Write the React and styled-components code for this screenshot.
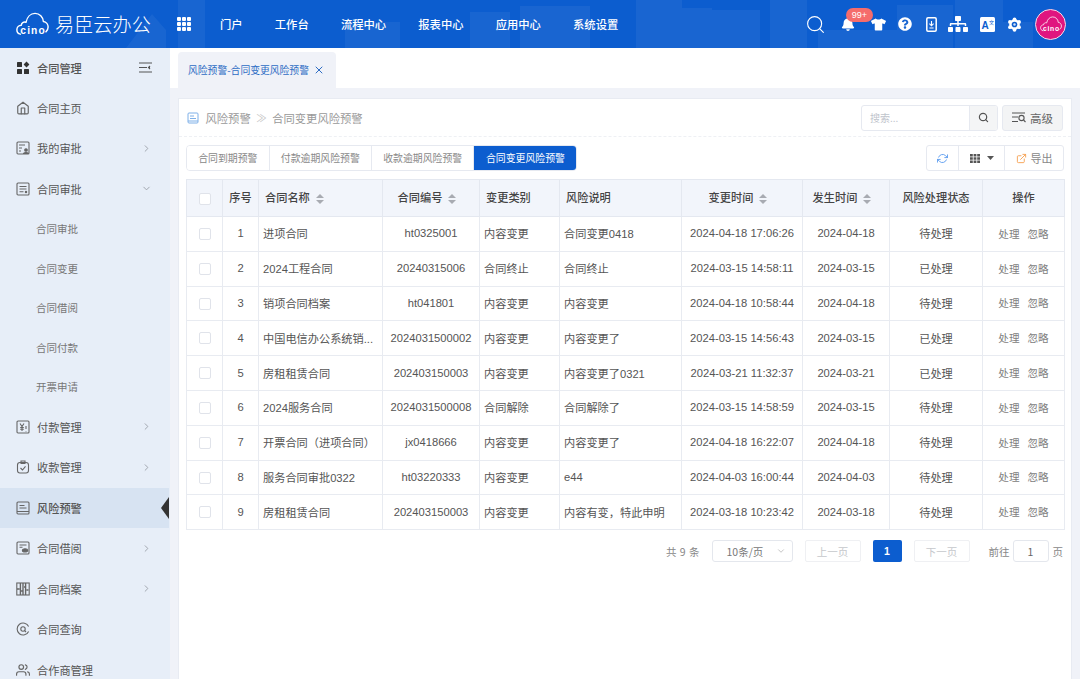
import styled, { createGlobalStyle } from 'styled-components';
import { FaBell, FaTshirt, FaQuestionCircle, FaSitemap } from 'react-icons/fa';
import { FiHome, FiSearch, FiChevronRight, FiChevronDown, FiRefreshCw, FiExternalLink, FiX, FiUsers } from 'react-icons/fi';

const Global = createGlobalStyle`
  html, body { margin: 0; padding: 0; height: 100%; overflow: hidden; }
  body { font-family: "Noto Sans CJK SC", "Liberation Sans", sans-serif; color: #555; }
  * { box-sizing: border-box; }
`;

const Page = styled.div`
  width: 1080px;
  height: 679px;
  display: flex;
  flex-direction: column;
  overflow: hidden;
`;

/* ===== cabecera ===== */
const Header = styled.header`
  position: relative;
  height: 48px;
  flex: none;
  display: flex;
  align-items: center;
  background: #0c5dcf;
  color: #fff;
`;

const HeaderDecor = styled.svg`
  position: absolute;
  inset: 0;
  width: 100%;
  height: 100%;
`;

const Logo = styled.div`
  position: relative;
  width: 170px;
  flex: none;
  display: flex;
  align-items: center;
  gap: 6px;
  padding-left: 16px;
  font-size: 19.2px;
  font-weight: 300;
  white-space: nowrap;
`;

const GridIcon = styled.div`
  width: 14px;
  height: 14px;
  margin-left: 7px;
  display: grid;
  grid-template-columns: repeat(3, 4px);
  grid-auto-rows: 4px;
  gap: 1px;
  flex: none;
  position: relative;
  i { background: #fff; border-radius: 1px; }
`;

const Nav = styled.nav`
  position: relative;
  display: flex;
  margin-left: 29px;
  gap: 32.2px;
`;

const NavItem = styled.span`
  font-size: 11.3px;
  font-weight: 500;
  white-space: nowrap;
`;

const HeaderTools = styled.div`
  position: relative;
  margin-left: auto;
  display: flex;
  align-items: center;
  padding-right: 14px;
`;

const Tool = styled.span`
  position: relative;
  display: flex;
  align-items: center;
  justify-content: center;
  width: ${props => props.$w}px;
  height: 24px;
  font-size: ${props => props.$size || 16}px;
`;

const Badge = styled.span`
  position: absolute;
  top: -4px;
  left: 18px;
  width: 27px;
  height: 14px;
  border-radius: 7px;
  background: #f56c6c;
  color: #fff;
  font-size: 9px;
  line-height: 14px;
  text-align: center;
  font-family: "Liberation Sans", sans-serif;
`;

const Avatar = styled.div`
  width: 31px;
  height: 31px;
  margin-left: 5px;
  border-radius: 50%;
  border: 1.5px solid #f3dbe8;
  background: #e0157f;
  display: flex;
  align-items: center;
  justify-content: center;
`;

/* ===== cuerpo ===== */
const Body = styled.div`
  flex: 1;
  display: flex;
  min-height: 0;
`;

const Sidebar = styled.aside`
  width: 170px;
  flex: none;
  background: #e7eef8;
  overflow: hidden;
`;

const MenuRow = styled.div`
  position: relative;
  height: ${props => props.$sub ? '39.5px' : '40.5px'};
  display: flex;
  align-items: center;
  padding: 0 17px 0 16px;
  gap: 7px;
  font-size: ${props => props.$sub ? '10.5px' : '11.2px'};
  color: ${props => props.$sub ? '#777' : '#555'};
  font-weight: ${props => props.$strong ? 500 : 400};
  padding-left: ${props => props.$sub ? '36px' : '16px'};
  background: ${props => props.$active ? '#d7e3f2' : 'none'};
  margin-right: 1px;
  white-space: nowrap;
  svg.lead { flex: none; width: 14px; height: 14px; color: #666; }
`;

const MenuHead = styled(MenuRow)`
  height: 39.6px;
`;

const MenuArrow = styled.span`
  margin-left: auto;
  display: flex;
  color: #9aa0a8;
  font-size: 11px;
`;

const ActiveMark = styled.span`
  position: absolute;
  right: 0;
  top: 9px;
  width: 0;
  height: 0;
  border-top: 11px solid transparent;
  border-bottom: 11px solid transparent;
  border-right: 8px solid #333;
`;

const Main = styled.main`
  flex: 1;
  min-width: 0;
  display: flex;
  flex-direction: column;
  background: #f0f2f8;
`;

const TabBar = styled.div`
  height: 40px;
  flex: none;
  background: #fff;
  padding: 4px 0 0 8px;
  display: flex;
`;

const PageTab = styled.div`
  width: 158px;
  display: flex;
  align-items: center;
  gap: 4px;
  padding-left: 10px;
  background: #f0f2f8;
  border-radius: 4px 4px 0 0;
  font-size: 9.8px;
  color: #2d6cc4;
  white-space: nowrap;
`;

const Card = styled.section`
  flex: 1;
  margin: 10px 8px 0 8px;
  background: #fff;
  border: 1px solid #e8ebf2;
  border-bottom: none;
  padding: 0 7px;
`;

const TopRow = styled.div`
  height: 38px;
  margin: 0 -7px;
  padding: 0 8px;
  display: flex;
  align-items: center;
  border-bottom: 1px dashed #eef0f4;
`;

const Crumbs = styled.div`
  display: flex;
  align-items: center;
  gap: 5.5px;
  font-size: 11.3px;
  color: #999;
  svg { flex: none; margin-right: 1px; }
`;

const Sep = styled.span`
  font-size: 10.5px;
  color: #c4c4c4;
`;

const SearchBox = styled.div`
  margin-left: auto;
  width: 137px;
  height: 26px;
  display: flex;
  border: 1px solid #e6e9f0;
  border-radius: 3px;
  overflow: hidden;
  font-size: 10px;
  color: #c0c4cc;
`;

const SearchInput = styled.span`
  flex: 1;
  line-height: 24px;
  padding-left: 8px;
`;

const SearchBtn = styled.span`
  width: 28px;
  display: flex;
  align-items: center;
  justify-content: center;
  background: #f4f5f6;
  border-left: 1px solid #e6e9f0;
  color: #555;
  font-size: 11px;
`;

const AdvBtn = styled.div`
  width: 61px;
  height: 26px;
  margin-left: 4px;
  display: flex;
  align-items: center;
  justify-content: center;
  gap: 4px;
  background: #f3f4f5;
  border: 1px solid #e6e9f0;
  border-radius: 3px;
  font-size: 11.5px;
  color: #666;
`;

const ToolRow = styled.div`
  display: flex;
  align-items: center;
  justify-content: space-between;
  height: 26px;
  margin-top: 8px;
`;

const Segments = styled.div`
  display: flex;
  height: 26px;
  border: 1px solid #e6e9f0;
  border-radius: 4px;
  overflow: hidden;
`;

const Segment = styled.div`
  display: flex;
  align-items: center;
  padding: 0 ${props => props.$active ? 11.5 : 11.2}px;
  font-size: 9.9px;
  color: ${props => props.$active ? '#fff' : '#888'};
  background: ${props => props.$active ? '#0c5dcf' : '#fff'};
  border-left: ${props => props.$first ? 'none' : '1px solid #e6e9f0'};
  white-space: nowrap;
`;

const TableTools = styled.div`
  display: flex;
  height: 26px;
  border: 1px solid #e6e9f0;
  border-radius: 3px;
`;

const TableTool = styled.div`
  width: ${props => props.$w}px;
  display: flex;
  align-items: center;
  justify-content: center;
  gap: 4px;
  font-size: 11px;
  color: #888;
  border-left: ${props => props.$first ? 'none' : '1px solid #e6e9f0'};
`;

const Table = styled.table`
  width: 878px;
  margin-top: 8px;
  table-layout: fixed;
  border-collapse: collapse;
  border: 1px solid #e4e8f0;
  font-size: 11.2px;
`;

const Th = styled.th`
  height: 37px;
  padding: 0 ${props => props.$tight ? 0 : 6}px 2px;
  background: #f2f5fb;
  border: 1px solid #e4e8f0;
  color: #444;
  font-weight: 500;
  text-align: ${props => props.$left ? 'left' : 'center'};
  white-space: nowrap;
`;

const Td = styled.td`
  height: 34.8px;
  padding: 0 4px 1px;
  border: 1px solid #e8ebf1;
  color: #555;
  text-align: ${props => props.$left ? 'left' : 'center'};
  white-space: nowrap;
  overflow: hidden;
  font-family: "Liberation Sans", "Noto Sans CJK SC", sans-serif;
`;

const Box = styled.span`
  display: inline-block;
  width: 12px;
  height: 12px;
  background: #fff;
  border: 1px solid #e0e3ea;
  border-radius: 2px;
  vertical-align: middle;
`;

const Sort = styled.span`
  display: inline-flex;
  flex-direction: column;
  gap: 2px;
  margin: 0 8px 0 6px;
  vertical-align: middle;
  i {
    width: 0; height: 0;
    border-left: 4px solid transparent;
    border-right: 4px solid transparent;
  }
  i:first-child { border-bottom: 4px solid #a8abb2; }
  i:last-child { border-top: 4px solid #a8abb2; }
`;

const Action = styled.span`
  font-size: 10.6px;
  color: #808080;
  & + & { margin-left: 8px; }
`;

const Pager = styled.div`
  display: flex;
  justify-content: flex-end;
  align-items: center;
  margin-top: 10px;
  height: 22px;
  padding-right: 1px;
  font-size: 10.5px;
  word-spacing: 1px;
  color: #888;
  white-space: nowrap;
`;

const PageSize = styled.div`
  width: 81px;
  height: 22px;
  margin-left: 12px;
  display: flex;
  align-items: center;
  justify-content: space-between;
  padding: 0 6px 0 14px;
  border: 1px solid #e4e7ed;
  border-radius: 3px;
  color: #777;
`;

const PageBtn = styled.div`
  width: 56px;
  height: 22px;
  margin-left: 12px;
  display: flex;
  align-items: center;
  justify-content: center;
  border: 1px solid #eff0f3;
  border-radius: 2px;
  color: #c6c8cc;
`;

const PageCurrent = styled.div`
  width: 29px;
  height: 22px;
  margin-left: 12px;
  display: flex;
  align-items: center;
  justify-content: center;
  background: #0c5dcf;
  border-radius: 2px;
  color: #fff;
  font-weight: 700;
  font-family: "Liberation Sans", sans-serif;
`;

const GoLabel = styled.span`
  margin-left: 19px;
`;

const GoInput = styled.div`
  width: 36px;
  height: 22px;
  margin: 0 4px 0 3px;
  display: flex;
  align-items: center;
  justify-content: center;
  border: 1px solid #e4e7ed;
  border-radius: 3px;
  color: #666;
`;

const CloudLogo = ({ size = 33, stroke = 1.5 }) => (
  <svg width={size} height={size * 0.72} viewBox="0 0 34 24" fill="none" stroke="#fff" strokeWidth={stroke} strokeLinecap="round" strokeLinejoin="round">
    <path d="M4.5 22.6C2 22 .9 20 .9 18c0-2.6 2-4.6 4.6-4.6C5.6 11 7.8 9.6 10.3 10.4 11.4 5 15 1.2 19.6 1.2c4.8 0 8.2 3.6 8.6 8.4 3 .3 4.9 2.8 4.9 5.6 0 2.2-.9 3.8-2.3 5" />
    <text x="4.5" y="22.6" fontSize="10.5" fontWeight="700" textLength="25" fontFamily="Liberation Sans, sans-serif" fill="#fff" stroke="none">cino</text>
  </svg>
);

const DocIcon = ({ children }) => (
  <svg className="lead" viewBox="0 0 14 14" fill="none" stroke="currentColor" strokeWidth="1.1">
    <rect x="1" y="1" width="12" height="12" rx="1" />
    {children}
  </svg>
);

const icons = {
  grid: (
    <svg className="lead" viewBox="0 0 14 14" fill="#333">
      <rect x="1" y="1" width="5" height="5" rx=".6" />
      <path d="M10.5 .6 13.4 3.5 10.5 6.4 7.6 3.5z" />
      <rect x="1" y="8" width="5" height="5" rx=".6" />
      <rect x="8" y="8" width="5" height="5" rx=".6" />
    </svg>
  ),
  home: <FiHome className="lead" />,
  mine: <DocIcon><path d="M3 4h6M3 7h3M3 10h2" /><circle cx="10" cy="9" r="1.3" fill="currentColor" /><path d="M7.5 13c0-2 5-2 5 0" fill="currentColor" /></DocIcon>,
  audit: <DocIcon><path d="M3.5 4.5h7M3.5 7h7M3.5 9.8h4" /><circle cx="10" cy="10" r=".7" fill="currentColor" /></DocIcon>,
  pay: <DocIcon><path d="M4 3.5 6 6.5 8 3.5M6 6.5V11M4.2 7.5h3.6M4.2 9.3h3.6M10 6v3M10 11v.5" /></DocIcon>,
  receive: (
    <svg className="lead" viewBox="0 0 14 14" fill="none" stroke="currentColor" strokeWidth="1.1">
      <rect x="1.5" y="2.5" width="11" height="10.5" rx="2.5" />
      <path d="M5 1h4v2.4H5zM4.5 8l2 2 3-3.6" />
    </svg>
  ),
  risk: <DocIcon><path d="M3.5 4.5h5M3.5 7h7M1 10.5h12" /></DocIcon>,
  borrow: <DocIcon><path d="M3.5 4h7M3.5 6.2h3" /><ellipse cx="9" cy="9.4" rx="2.6" ry="1.6" fill="currentColor" /></DocIcon>,
  archive: (
    <svg className="lead" viewBox="0 0 14 14" fill="none" stroke="currentColor" strokeWidth="1.1">
      <rect x=".8" y="1" width="12.4" height="12" />
      <path d="M4.4 1v12M7 1v12M9.6 1v12M1 7h2.5M5 9h1.3M8 5h1M10.5 8h2" strokeWidth="1.4" />
    </svg>
  ),
  query: (
    <svg className="lead" viewBox="0 0 14 14" fill="none" stroke="currentColor" strokeWidth="1.1">
      <path d="M12.6 9.5A6 6 0 1 1 12.6 4.5" />
      <circle cx="7" cy="7" r="2.2" />
      <path d="M8.6 8.6 10 10" />
    </svg>
  ),
  partner: <FiUsers className="lead" />,
};

const menu = [
  { label: '合同主页', icon: 'home' },
  { label: '我的审批', icon: 'mine', arrow: 'right' },
  { label: '合同审批', icon: 'audit', arrow: 'down' },
  { label: '合同审批', sub: true },
  { label: '合同变更', sub: true },
  { label: '合同借阅', sub: true },
  { label: '合同付款', sub: true },
  { label: '开票申请', sub: true },
  { label: '付款管理', icon: 'pay', arrow: 'right' },
  { label: '收款管理', icon: 'receive', arrow: 'right' },
  { label: '风险预警', icon: 'risk', active: true },
  { label: '合同借阅', icon: 'borrow', arrow: 'right' },
  { label: '合同档案', icon: 'archive', arrow: 'right' },
  { label: '合同查询', icon: 'query' },
  { label: '合作商管理', icon: 'partner' },
];

const rows = [
  ['进项合同', 'ht0325001', '内容变更', '合同变更0418', '2024-04-18 17:06:26', '2024-04-18', '待处理'],
  ['2024工程合同', '20240315006', '合同终止', '合同终止', '2024-03-15 14:58:11', '2024-03-15', '已处理'],
  ['销项合同档案', 'ht041801', '内容变更', '内容变更', '2024-04-18 10:58:44', '2024-04-18', '待处理'],
  ['中国电信办公系统销...', '2024031500002', '内容变更', '内容变更了', '2024-03-15 14:56:43', '2024-03-15', '已处理'],
  ['房租租赁合同', '202403150003', '内容变更', '内容变更了0321', '2024-03-21 11:32:37', '2024-03-21', '已处理'],
  ['2024服务合同', '2024031500008', '合同解除', '合同解除了', '2024-03-15 14:58:59', '2024-03-15', '待处理'],
  ['开票合同（进项合同）', 'jx0418666', '内容变更', '内容变更了', '2024-04-18 16:22:07', '2024-04-18', '待处理'],
  ['服务合同审批0322', 'ht03220333', '内容变更', 'e44', '2024-04-03 16:00:44', '2024-04-03', '待处理'],
  ['房租租赁合同', '202403150003', '内容变更', '内容有变，特此申明', '2024-03-18 10:23:42', '2024-03-18', '待处理'],
];

const cols = [36, 36, 124, 97, 80, 122, 121, 87, 93, 82];

const gearTeeth = [0, 60, 120, 180, 240, 300];

export default function App() {
  return (
    <Page>
      <Global />
      <Header>
        <HeaderDecor viewBox="0 0 1080 48" preserveAspectRatio="none">
          <g fill="#fff" opacity=".05">
            <path d="M126 48 152 14 166 30V48zM178 0h27v48h-27zM345 22h55v26h-55zM470 12h40v36h-40zM520 6h70v42h-70z" />
            <path d="M636 0h46v48h-46zM682 8h30v40h-30zM712 10h48v38h-48zM770 0h37v48h-37zM818 30h80v18h-80zM897 5h56v43h-56zM955 0h48v48h-48zM1003 22h30v26h-30z" />
          </g>
        </HeaderDecor>
        <Logo>
          <CloudLogo />
          <span>易臣云办公</span>
        </Logo>
        <GridIcon>{Array.from({ length: 9 }, (_, i) => <i key={i} />)}</GridIcon>
        <Nav>
          {['门户', '工作台', '流程中心', '报表中心', '应用中心', '系统设置'].map(t => <NavItem key={t}>{t}</NavItem>)}
        </Nav>
        <HeaderTools>
          <Tool $size={21} $w={26}><FiSearch strokeWidth={1.3} /></Tool>
          <Tool $size={14} $w={40}><FaBell /><Badge>99+</Badge></Tool>
          <Tool $size={15} $w={20}><FaTshirt /></Tool>
          <Tool $size={14} $w={34}><FaQuestionCircle /></Tool>
          <Tool $w={18}>
            <svg width="11" height="15" viewBox="0 0 11 15" fill="none" stroke="#fff" strokeWidth="1.5">
              <rect x=".8" y=".8" width="9.4" height="13.4" rx="1.2" />
              <path d="M5.5 4v4.5M3.4 6.6 5.5 8.8 7.6 6.6M3.4 11h4.2" strokeWidth="1.1" />
            </svg>
          </Tool>
          <Tool $size={20} $w={36}><FaSitemap /></Tool>
          <Tool $w={22}>
            <svg width="15" height="15" viewBox="0 0 15 15">
              <rect width="15" height="15" rx="1.5" fill="#fff" />
              <text x="1.5" y="12" fontSize="10" fontWeight="700" fontFamily="Liberation Sans" fill="#0c5dcf">A</text>
              <text x="9" y="6.5" fontSize="5" fontFamily="Noto Sans CJK SC" fill="#0c5dcf">文</text>
            </svg>
          </Tool>
          <Tool $w={32}>
            <svg width="15" height="15" viewBox="-8 -8 16 16">
              <circle r="5.6" fill="#fff" />
              {gearTeeth.map(a => <circle key={a} r="2" cx={5.6 * Math.sin(a * Math.PI / 180)} cy={-5.6 * Math.cos(a * Math.PI / 180)} fill="#fff" />)}
              <circle r="3" fill="#0c5dcf" />
              <circle r="1.3" fill="#cfe0f7" />
            </svg>
          </Tool>
          <Avatar><CloudLogo size={22} stroke={1.2} /></Avatar>
        </HeaderTools>
      </Header>
      <Body>
        <Sidebar>
          <MenuHead $strong>
            {icons.grid}
            合同管理
            <MenuArrow>
              <svg width="13" height="11" viewBox="0 0 13 11" fill="none" stroke="#555" strokeWidth="1.1">
                <path d="M0 1h13M0 5.5h8M0 10h13" />
                <path d="M11 4 9.5 5.5 11 7" fill="#555" />
              </svg>
            </MenuArrow>
          </MenuHead>
          {menu.map((m, i) => (
            <MenuRow key={i} $sub={m.sub} $active={m.active} $strong={m.active}>
              {m.icon && icons[m.icon]}
              {m.label}
              {m.arrow === 'right' && <MenuArrow><FiChevronRight /></MenuArrow>}
              {m.arrow === 'down' && <MenuArrow><FiChevronDown /></MenuArrow>}
              {m.active && <ActiveMark />}
            </MenuRow>
          ))}
        </Sidebar>
        <Main>
          <TabBar>
            <PageTab>风险预警-合同变更风险预警 <FiX size={12} strokeWidth={2} /></PageTab>
          </TabBar>
          <Card>
            <TopRow>
              <Crumbs>
                <svg width="12" height="12" viewBox="0 0 12 12" fill="none" stroke="#7fb0e8" strokeWidth="1">
                  <rect x="1" y="1" width="10" height="10" rx="1" />
                  <path d="M3 4h4M3 6.5h6M1 9h10" />
                </svg>
                风险预警
                <Sep>≫</Sep>
                合同变更风险预警
              </Crumbs>
              <SearchBox>
                <SearchInput>搜索...</SearchInput>
                <SearchBtn><FiSearch strokeWidth={2.6} /></SearchBtn>
              </SearchBox>
              <AdvBtn>
                <svg width="14" height="11" viewBox="0 0 14 11" fill="none" stroke="#555" strokeWidth="1.1">
                  <path d="M0 1h13M0 5h6M0 9.5h6" />
                  <circle cx="9.5" cy="6" r="2.6" />
                  <path d="M11.5 8 13.5 10" />
                </svg>
                高级
              </AdvBtn>
            </TopRow>
            <ToolRow>
              <Segments>
                <Segment $first>合同到期预警</Segment>
                <Segment>付款逾期风险预警</Segment>
                <Segment>收款逾期风险预警</Segment>
                <Segment $active>合同变更风险预警</Segment>
              </Segments>
              <TableTools>
                <TableTool $w={31} $first><FiRefreshCw color="#5b9bef" size={11} /></TableTool>
                <TableTool $w={46}>
                  <svg width="10" height="9" viewBox="0 0 10 9" fill="#555">
                    <path d="M0 0h2.8v2.6H0zM3.6 0h2.8v2.6H3.6zM7.2 0H10v2.6H7.2zM0 3.2h2.8v2.6H0zM3.6 3.2h2.8v2.6H3.6zM7.2 3.2H10v2.6H7.2zM0 6.4h2.8V9H0zM3.6 6.4h2.8V9H3.6zM7.2 6.4H10V9H7.2z" />
                  </svg>
                  <svg width="7" height="4" viewBox="0 0 7 4" fill="#555" style={{ marginLeft: 3 }}><path d="M0 0h7L3.5 4z" /></svg>
                </TableTool>
                <TableTool $w={59}><FiExternalLink color="#f5a050" size={11} />导出</TableTool>
              </TableTools>
            </ToolRow>
            <Table>
              <colgroup>{cols.map((w, i) => <col key={i} width={w} />)}</colgroup>
              <thead>
                <tr>
                  <Th><Box /></Th>
                  <Th $tight>序号</Th>
                  <Th $left>合同名称<Sort><i /><i /></Sort></Th>
                  <Th>合同编号<Sort><i /><i /></Sort></Th>
                  <Th $left>变更类别</Th>
                  <Th $left>风险说明</Th>
                  <Th>变更时间<Sort><i /><i /></Sort></Th>
                  <Th>发生时间<Sort><i /><i /></Sort></Th>
                  <Th>风险处理状态</Th>
                  <Th>操作</Th>
                </tr>
              </thead>
              <tbody>
                {rows.map((r, i) => (
                  <tr key={i}>
                    <Td><Box /></Td>
                    <Td>{i + 1}</Td>
                    <Td $left>{r[0]}</Td>
                    <Td>{r[1]}</Td>
                    <Td $left>{r[2]}</Td>
                    <Td $left>{r[3]}</Td>
                    <Td>{r[4]}</Td>
                    <Td>{r[5]}</Td>
                    <Td>{r[6]}</Td>
                    <Td><Action>处理</Action><Action>忽略</Action></Td>
                  </tr>
                ))}
              </tbody>
            </Table>
            <Pager>
              共 9 条
              <PageSize>10条/页<FiChevronDown size={10} color="#bbb" /></PageSize>
              <PageBtn>上一页</PageBtn>
              <PageCurrent>1</PageCurrent>
              <PageBtn>下一页</PageBtn>
              <GoLabel>前往</GoLabel>
              <GoInput>1</GoInput>
              页
            </Pager>
          </Card>
        </Main>
      </Body>
    </Page>
  );
}
